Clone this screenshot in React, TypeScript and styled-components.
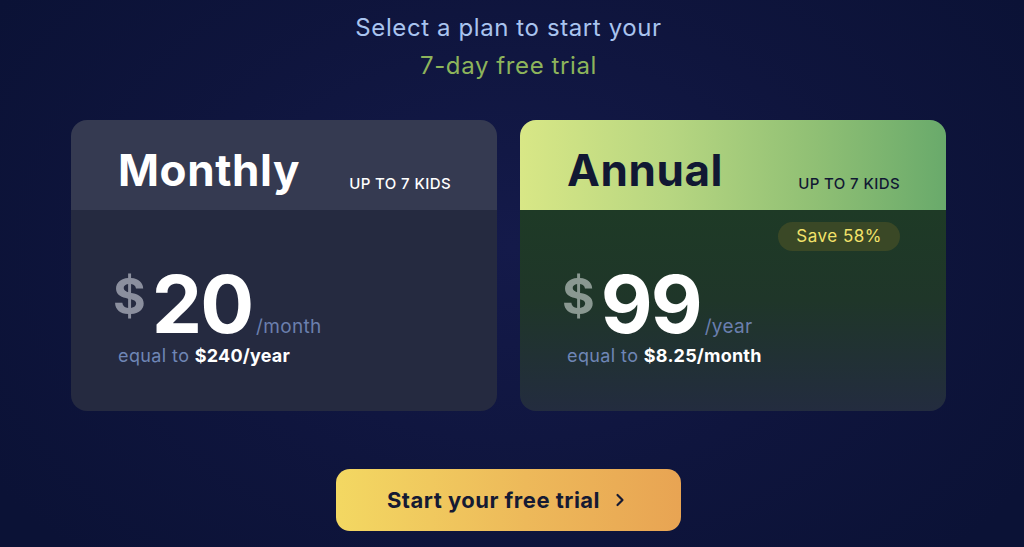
import * as React from 'react';
import styled, { createGlobalStyle } from 'styled-components';
import { ChevronRight } from 'lucide-react';

const Global = createGlobalStyle`
  html, body {
    margin: 0;
    padding: 0;
    height: 100%;
  }
  body {
    font-family: Inter, "Liberation Sans", sans-serif;
    background: #0d1339;
  }
`;

const Page = styled.div`
  width: 1024px;
  height: 547px;
  overflow: hidden;
  display: flex;
  flex-direction: column;
  align-items: center;
  background: radial-gradient(ellipse 60% 80% at 50% 45%, #141a4a 0%, #10164080 60%, #0b1236 100%), #0d1339;
`;

const Heading = styled.div`
  padding-top: 9px;
  margin-right: 7px;
  display: flex;
  flex-direction: column;
  align-items: center;
  font-size: 24px;
  line-height: 38px;
  letter-spacing: 0.6px;
`;

const HeadLine = styled.div<{ $tone: string }>`
  color: ${p => p.$tone};
`;

const Cards = styled.div`
  margin-top: 35px;
  margin-right: 7px;
  display: flex;
  gap: 23px;
`;

const Card = styled.div`
  width: 426px;
  height: 291px;
  border-radius: 16px;
  overflow: hidden;
  display: flex;
  flex-direction: column;
`;

const Header = styled.div<{ $annual?: boolean }>`
  height: 90px;
  box-sizing: border-box;
  padding: 0 46px 14px 47px;
  display: flex;
  align-items: flex-end;
  justify-content: space-between;
  background: ${p =>
    p.$annual
      ? 'linear-gradient(90deg, #d8e786 0%, #b7d681 35%, #8fbf74 70%, #69aa6b 100%)'
      : '#353a51'};
  color: ${p => (p.$annual ? '#111833' : '#ffffff')};
`;

const PlanName = styled.div`
  font-size: 44px;
  font-weight: 700;
  line-height: 52px;
  letter-spacing: 0.6px;
`;

const Kids = styled.div`
  font-size: 15px;
  font-weight: 500;
  letter-spacing: 0.4px;
  line-height: 18px;
  padding-bottom: 3px;
`;

const Body = styled.div<{ $annual?: boolean }>`
  position: relative;
  flex: 1;
  padding: 54px 47px 0 47px;
  background: ${p =>
    p.$annual
      ? 'linear-gradient(180deg, #1e3a26 0%, #1f3629 45%, #232c3f 100%)'
      : '#252a40'};
`;

const Badge = styled.div`
  position: absolute;
  top: 12px;
  right: 46px;
  height: 29px;
  padding: 0 18px;
  border-radius: 15px;
  background: #3a4826;
  color: #f2e26a;
  font-size: 17px;
  line-height: 29px;
  letter-spacing: 0.5px;
`;

const PriceRow = styled.div`
  display: flex;
  align-items: baseline;
  margin-left: -5px;
  height: 80px;
`;

const Dollar = styled.span<{ $annual?: boolean }>`
  align-self: flex-start;
  margin-top: 7px;
  margin-right: 6px;
  font-size: 50px;
  font-weight: 700;
  line-height: 1;
  color: ${p => (p.$annual ? '#8a9891' : '#8b8f9e')};
`;

const Amount = styled.span`
  font-size: 80px;
  font-weight: 700;
  line-height: 80px;
  color: #ffffff;
  letter-spacing: -2px;
`;

const Unit = styled.span`
  margin-left: 4px;
  font-size: 19px;
  line-height: 1;
  color: #6b7fae;
  letter-spacing: 0.3px;
`;

const Equal = styled.div`
  margin-top: 1px;
  font-size: 18px;
  line-height: 22px;
  color: #6f86b6;
  letter-spacing: 0.4px;
  b {
    color: #ffffff;
    font-weight: 700;
    letter-spacing: 0.2px;
  }
`;

const Cta = styled.button`
  margin-top: 58px;
  margin-right: 7px;
  width: 345px;
  height: 62px;
  border: none;
  border-radius: 14px;
  background: linear-gradient(90deg, #f3d862 0%, #edb95a 55%, #e8a453 100%);
  color: #151a33;
  font-family: inherit;
  font-size: 22px;
  font-weight: 700;
  letter-spacing: 0.5px;
  display: flex;
  align-items: center;
  justify-content: center;
  gap: 10px;
  padding: 0;
  cursor: pointer;
`;

type Plan = {
  name: string;
  amount: string;
  unit: string;
  equal: string;
  annual?: boolean;
  save?: string;
};

const plans: Plan[] = [
  { name: 'Monthly', amount: '20', unit: '/month', equal: '$240/year' },
  { name: 'Annual', amount: '99', unit: '/year', equal: '$8.25/month', annual: true, save: 'Save 58%' },
];

const App: React.FC = () => {
  return (
    <>
      <Global />
      <Page>
        <Heading>
          <HeadLine $tone="#a9c4ef">Select a plan to start your</HeadLine>
          <HeadLine $tone="#8db45b">7-day free trial</HeadLine>
        </Heading>
        <Cards>
          {plans.map(p => (
            <Card key={p.name}>
              <Header $annual={p.annual}>
                <PlanName>{p.name}</PlanName>
                <Kids>UP TO 7 KIDS</Kids>
              </Header>
              <Body $annual={p.annual}>
                {p.save && <Badge>{p.save}</Badge>}
                <PriceRow>
                  <Dollar $annual={p.annual}>$</Dollar>
                  <Amount>{p.amount}</Amount>
                  <Unit>{p.unit}</Unit>
                </PriceRow>
                <Equal>
                  equal to <b>{p.equal}</b>
                </Equal>
              </Body>
            </Card>
          ))}
        </Cards>
        <Cta>
          Start your free trial
          <ChevronRight size={20} strokeWidth={2.6} />
        </Cta>
      </Page>
    </>
  );
};

export default App;
